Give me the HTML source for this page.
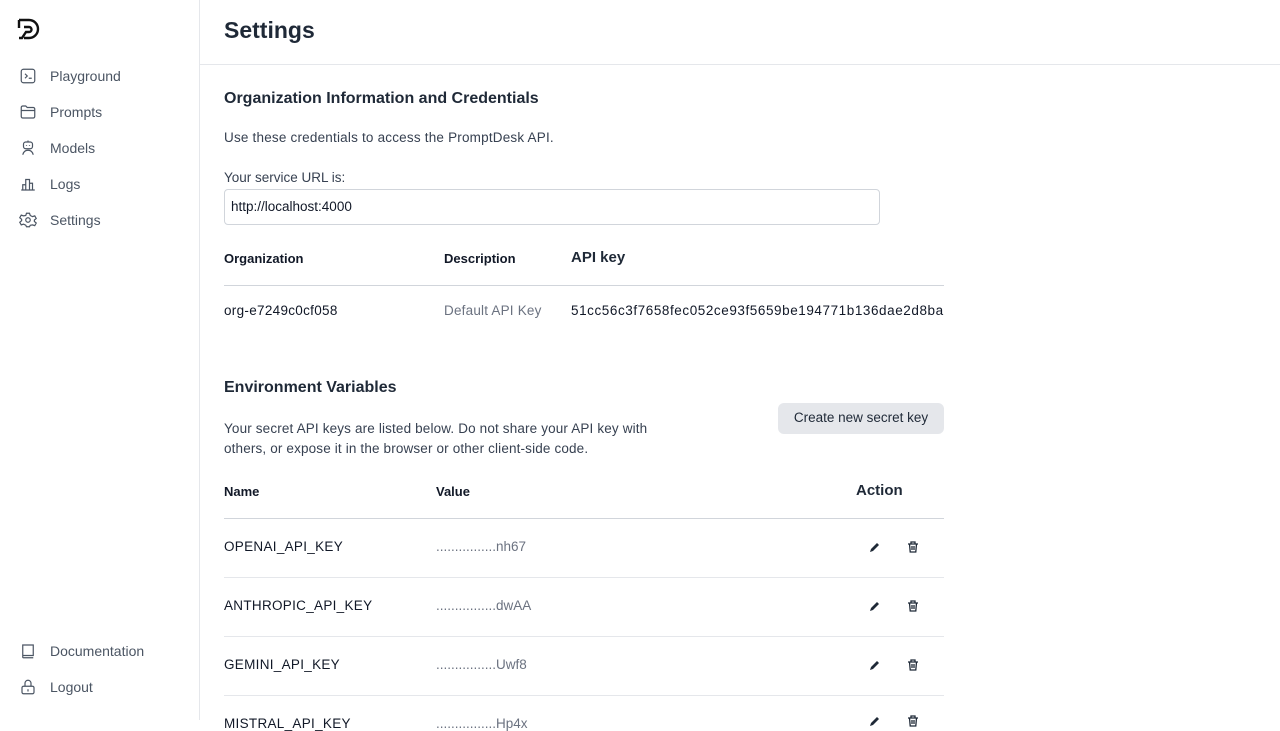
<!DOCTYPE html>
<html><head><meta charset="utf-8"><style>
*{margin:0;padding:0;box-sizing:border-box}
body{width:1280px;height:720px;overflow:hidden;background:#fff;font-family:"Liberation Sans",sans-serif;color:#111827;position:relative}
.a{position:absolute;white-space:nowrap}
.side{position:absolute;left:0;top:0;width:200px;height:720px;border-right:1px solid #e5e7eb}
.nav{position:absolute;left:50px;font-size:14px;color:#4b5563}
.ic{position:absolute;left:19px;width:18px;height:18px}
.hr{position:absolute;height:1px;background:#e5e7eb}
.h{font-size:13px;font-weight:bold}
.t{font-size:13.5px}
.g{color:#6b7280}
</style></head><body>
<div class="side">
<svg class="a" style="left:17px;top:17px" width="24" height="24" viewBox="0 0 24 24" fill="none" stroke="#111" stroke-width="2.4"><path d="M2 3h10a9 9 0 0 1 0 18H7"/><path d="M2 3v8M7 10h5a2.5 2.5 0 0 1 0 5H9L5 21H2"/></svg>
<svg class="ic" style="top:67px" viewBox="0 0 24 24" fill="none" stroke="#4b5563" stroke-width="1.6"><rect x="3" y="3" width="18" height="18" rx="3"/><path d="M8 9l3 3-3 3M13 15h4"/></svg>
<div class="nav" style="top:68px">Playground</div>
<svg class="ic" style="top:103px" viewBox="0 0 24 24" fill="none" stroke="#4b5563" stroke-width="1.6"><path d="M3 6a2 2 0 0 1 2-2h4l2 2h8a2 2 0 0 1 2 2v10a2 2 0 0 1-2 2H5a2 2 0 0 1-2-2z M3 10h18"/></svg>
<div class="nav" style="top:104px">Prompts</div>
<svg class="ic" style="top:139px" viewBox="0 0 24 24" fill="none" stroke="#4b5563" stroke-width="1.6"><rect x="6" y="4" width="12" height="9" rx="3"/><path d="M10 8v1M14 8v1M5 21c1-4 3-6 7-6s6 2 7 6M12 2v2"/></svg>
<div class="nav" style="top:140px">Models</div>
<svg class="ic" style="top:175px" viewBox="0 0 24 24" fill="none" stroke="#4b5563" stroke-width="1.6"><path d="M3 20h18M5 20v-7h4v7M9 20V6h5v14M14 20v-9h4v9"/></svg>
<div class="nav" style="top:176px">Logs</div>
<svg class="ic" style="top:211px" viewBox="0 0 24 24" fill="none" stroke="#4b5563" stroke-width="1.6"><path d="M10 3h4l1 3 3 1.5 3-1 2 3.5-2.5 2v2l2.5 2-2 3.5-3-1L15 19l-1 2h-4l-1-2-3-1.5-3 1-2-3.5L3.5 13v-2L1 9l2-3.5 3 1L9 6z"/><circle cx="12" cy="12" r="3"/></svg>
<div class="nav" style="top:212px">Settings</div>
<svg class="ic" style="top:642px" viewBox="0 0 24 24" fill="none" stroke="#4b5563" stroke-width="1.6"><path d="M5 4h14v14H5zM5 18v2a1 1 0 0 0 1 1h13"/></svg>
<div class="nav" style="top:643px">Documentation</div>
<svg class="ic" style="top:678px" viewBox="0 0 24 24" fill="none" stroke="#4b5563" stroke-width="1.6"><rect x="4" y="11" width="16" height="10" rx="2"/><path d="M8 11V7a4 4 0 0 1 8 0v4M12 15v3"/></svg>
<div class="nav" style="top:679px">Logout</div>
</div>
<div class="a" style="left:224px;top:17px;font-size:23px;font-weight:bold;color:#1f2937">Settings</div>
<div class="hr" style="left:200px;top:64px;width:1080px"></div>
<div class="a" style="left:224px;top:90px;font-size:16px;font-weight:bold;color:#1f2937">Organization Information and Credentials</div>
<div class="a t" style="left:224px;top:130px;color:#374151;letter-spacing:.2px">Use these credentials to access the PromptDesk API.</div>
<div class="a t" style="left:224px;top:170px;color:#374151">Your service URL is:</div>
<div class="a t" style="left:224px;top:189px;width:656px;height:36px;border:1px solid #d1d5db;border-radius:4px;padding:9px 6px">http://localhost:4000</div>
<div class="a h" style="left:224px;top:251px">Organization</div>
<div class="a h" style="left:444px;top:251px">Description</div>
<div class="a" style="left:571px;top:249px;font-size:15px;font-weight:bold;color:#1f2937">API key</div>
<div class="hr" style="left:224px;top:285px;width:720px;background:#d1d5db"></div>
<div class="a t" style="left:224px;top:303px;letter-spacing:.3px">org-e7249c0cf058</div>
<div class="a t g" style="left:444px;top:303px;letter-spacing:.2px">Default API Key</div>
<div class="a t" style="left:571px;top:303px;letter-spacing:.57px">51cc56c3f7658fec052ce93f5659be194771b136dae2d8ba</div>
<div class="a" style="left:224px;top:379px;font-size:16px;font-weight:bold;color:#1f2937">Environment Variables</div>
<div class="a t" style="left:224px;top:419px;line-height:20px;color:#374151;letter-spacing:.15px">Your secret API keys are listed below. Do not share your API key with<br>others, or expose it in the browser or other client-side code.</div>
<div class="a t" style="left:778px;top:403px;width:166px;height:31px;background:#e5e7eb;border-radius:6px;text-align:center;line-height:29px;color:#1f2937">Create new secret key</div>
<div class="a h" style="left:224px;top:484px">Name</div>
<div class="a h" style="left:436px;top:484px">Value</div>
<div class="a" style="left:856px;top:482px;font-size:15px;font-weight:bold;color:#1f2937">Action</div>
<div class="hr" style="left:224px;top:518px;width:720px;background:#d1d5db"></div>
<div class="a t" style="left:224px;top:539px;letter-spacing:.3px">OPENAI_API_KEY</div><div class="a t g" style="left:436px;top:539px">................nh67</div>
<div class="hr" style="left:224px;top:577px;width:720px"></div>
<div class="a t" style="left:224px;top:598px;letter-spacing:.3px">ANTHROPIC_API_KEY</div><div class="a t g" style="left:436px;top:598px">................dwAA</div>
<div class="hr" style="left:224px;top:636px;width:720px"></div>
<div class="a t" style="left:224px;top:657px;letter-spacing:.3px">GEMINI_API_KEY</div><div class="a t g" style="left:436px;top:657px">................Uwf8</div>
<div class="hr" style="left:224px;top:695px;width:720px"></div>
<div class="a t" style="left:224px;top:716px;letter-spacing:.3px">MISTRAL_API_KEY</div><div class="a t g" style="left:436px;top:716px">................Hp4x</div>
<svg width="0" height="0" style="position:absolute"><defs>
<g id="pen"><path d="M2 12l1-3 6-6 2 2-6 6z" fill="#1f2937"/></g>
<g id="bin" fill="none" stroke="#1f2937" stroke-width="1.3"><path d="M2 4h10M5 4V2h4v2M3.5 4l.7 8h5.6l.7-8M6 6v4M8 6v4"/></g></defs></svg>
<svg class="a" style="left:868px;top:540px" width="14" height="14"><use href="#pen"/></svg>
<svg class="a" style="left:906px;top:540px" width="14" height="14"><use href="#bin"/></svg>
<svg class="a" style="left:868px;top:599px" width="14" height="14"><use href="#pen"/></svg>
<svg class="a" style="left:906px;top:599px" width="14" height="14"><use href="#bin"/></svg>
<svg class="a" style="left:868px;top:658px" width="14" height="14"><use href="#pen"/></svg>
<svg class="a" style="left:906px;top:658px" width="14" height="14"><use href="#bin"/></svg>
<svg class="a" style="left:868px;top:714px" width="14" height="14"><use href="#pen"/></svg>
<svg class="a" style="left:906px;top:714px" width="14" height="14"><use href="#bin"/></svg>
</body></html>
